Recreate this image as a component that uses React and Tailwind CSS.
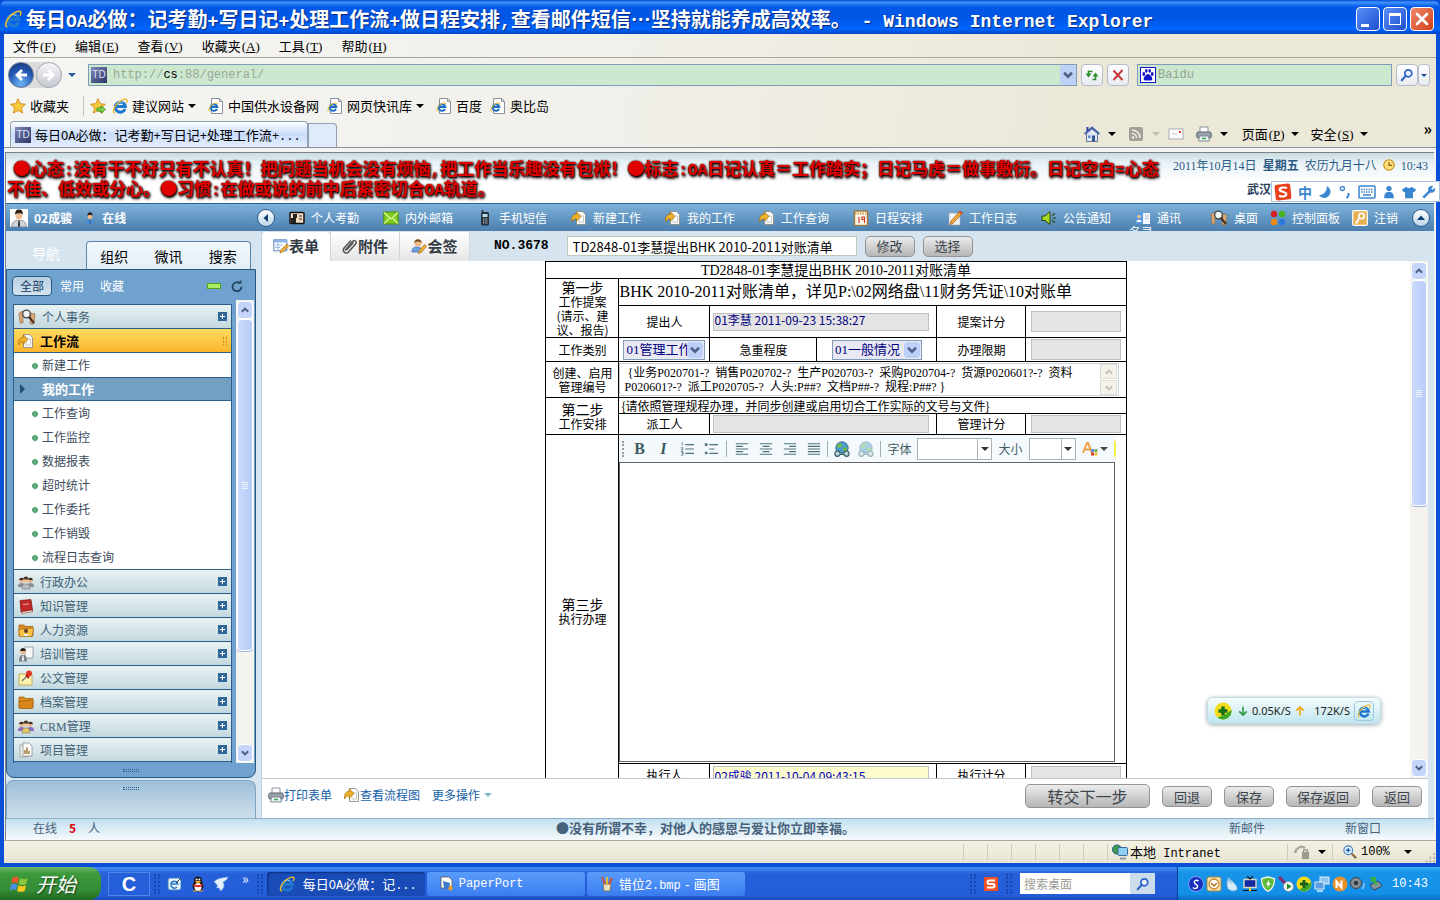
import React from 'react';

// Latin runs get their own face so that they take about half a Chinese character
function Mixed({ text, latin = "font-['Liberation_Serif',serif]" }) {
  return text.split(/([\x21-\x7e]+)/).filter(Boolean).map((part, i) =>
    /^[\x21-\x7e]/.test(part) ? (
      <span key={i} className={`leading-none ${latin}`}>{part}</span>
    ) : (
      <React.Fragment key={i}>{part}</React.Fragment>
    )
  );
}

function Svg({ className = 'w-4 h-4', box = '0 0 16 16', children }) {
  return (
    <svg viewBox={box} className={`shrink-0 ${className}`} fill="none" aria-hidden="true">
      {children}
    </svg>
  );
}

const IconIE = ({ className }) => (
  <Svg className={className}>
    <path d="M13 11A5 5 0 1 1 13.300 8.600H4" stroke="#1f78d0" strokeWidth="3" />
    <path d="M5 5.500A4.600 4.600 0 0 1 11 5" stroke="#7cc8f8" strokeWidth="1" />
    <path d="M3 15C0 14.500 1.500 8.500 6.500 4.500 10 1.500 14.500 0 15 2.200c.2 1-.3 2-.8 2.800" stroke="#eebc2c" strokeWidth="1.400" />
  </Svg>
);

const IconPage = () => (
  <Svg>
    <path d="M3.500.5h8l3 3v12h-11z" fill="#fff" stroke="#8c9199" />
    <path d="M11.500.5v3h3" stroke="#8c9199" />
    <path d="M9 11A3.300 3.300 0 1 1 9.300 9H3.600" stroke="#1b6fc4" strokeWidth="2" />
    <path d="M1.500 13.500C0 12 2 8 5 6.200 8 4.500 10.500 4.500 10 6.500" stroke="#e6b422" />
  </Svg>
);

const IconTD = () => (
  <span className="w-4 h-4 shrink-0 bg-gradient-to-br from-[#8189b8] to-[#2c3468] text-[10px] leading-4 text-center text-[#dfe3f5] font-['Liberation_Sans',sans-serif]">TD</span>
);

const IconStar = ({ arrow }) => (
  <Svg>
    <path d="M8 .8l2.200 4.900 5.200.6-3.900 3.500 1.100 5.300L8 12.400l-4.600 2.700 1.100-5.300L.6 6.300l5.200-.6z" fill="#fbc93d" stroke="#c98a16" strokeWidth=".9" />
    {arrow && <path d="M7 10h4V7.800l4.500 3.700L11 15.200V13H7z" fill="#7ed24b" stroke="#2f8a1d" strokeWidth=".8" />}
  </Svg>
);

const IconGlass = ({ className }) => (
  <Svg className={className}>
    <circle cx="9.500" cy="6" r="4" stroke="#2c63c4" strokeWidth="2" fill="#e6f1fb" />
    <path d="M6.500 9l-4.500 5" stroke="#2c63c4" strokeWidth="2.400" strokeLinecap="round" />
  </Svg>
);

const IconPrinter = () => (
  <Svg>
    <path d="M4 1h8v6H4z" fill="#fff" stroke="#8a93a0" />
    <rect x=".8" y="6" width="14.400" height="6" rx="1.500" fill="#9aa3ad" stroke="#59616b" />
    <path d="M3.500 10h9l1 5h-11z" fill="#e9f2f5" stroke="#6b7580" strokeWidth=".8" />
    <path d="M6 12.500h4" stroke="#3aa655" strokeWidth="1.500" />
  </Svg>
);

const IconHome = () => (
  <Svg>
    <path d="M2.500 7.500L8 3l5.500 4.500v8h-11z" fill="#dfe6f4" stroke="#45588c" strokeWidth=".8" />
    <path d="M.6 8L8 1.500 15.400 8" stroke="#4465a8" strokeWidth="1.800" />
    <path d="M2.500 1h2v4h-2z" fill="#2c3f9c" />
    <path d="M8 9.500h3v6H8z" fill="#34548f" />
    <path d="M4 9.500h2.500V12H4z" fill="#5a86cf" />
  </Svg>
);

const IconRss = () => (
  <Svg>
    <rect x="1" y="1" width="14" height="14" rx="2" fill="#a3a29a" />
    <path d="M4 4a8 8 0 0 1 8 8M4 7.500A4.500 4.500 0 0 1 8.500 12" stroke="#f2f0e8" strokeWidth="1.500" />
    <circle cx="5" cy="11.500" r="1.200" fill="#f2f0e8" />
  </Svg>
);

const IconFlow = ({ className }) => (
  <Svg className={className}>
    <path d="M5.500 1.500h6l3 3v10h-9z" fill="#f8f8f6" stroke="#8c8c88" strokeWidth=".9" />
    <path d="M8 6h4.500v6H8z" fill="#fff" stroke="#b5b5b0" strokeWidth=".7" />
    <path d="M.6 12C0 7 2 4.200 5.300 4.200V1.800L10 6.500 5.300 11.200V8.800C3 8.800 2 9.800.6 12z" fill="#f0b02a" stroke="#a06c08" strokeWidth=".7" />
  </Svg>
);

const IconMan = ({ className, shirt = '#eef2f6', tie = '#333' }) => (
  <Svg className={className}>
    <path d="M1.500 16c0-4 2-6 6.500-6s6.500 2 6.500 6z" fill={shirt} stroke="#6c747c" strokeWidth=".6" />
    <ellipse cx="8" cy="5.500" rx="3" ry="3.800" fill="#efbf93" />
    <path d="M4.600 5C4.400 1.500 6 .4 8 .4s3.600 1.100 3.400 4.600C10.500 3.500 6 3.500 4.600 5z" fill="#2b211b" />
    <path d="M7.500 10.500h1.200L9 15l-1 1-1-1z" fill={tie} />
  </Svg>
);

const IconCrowd = ({ a = '#8a8f94', b = '#b9bec3' }) => (
  <Svg>
    <path d="M0 13c0-3 1-4 3.500-4S7 10 7 13zM9 13c0-3 1-4 3.500-4S16 10 16 13z" fill={a} />
    <circle cx="3.500" cy="6.500" r="2.300" fill="#e3b189" />
    <circle cx="12.500" cy="6.500" r="2.300" fill="#e3b189" />
    <path d="M1.200 6c0-3 4.600-3 4.600 0zM10.200 6c0-3 4.600-3 4.600 0z" fill="#3a2c22" />
    <path d="M4 15c0-4 1-5 4-5s4 1 4 5z" fill={b} stroke="#666" strokeWidth=".5" />
    <circle cx="8" cy="6" r="2.800" fill="#efc298" />
    <path d="M5.200 5.500c0-4 5.600-4 5.600 0z" fill="#4a3527" />
  </Svg>
);

const IconDesk = () => (
  <Svg className="w-[18px] h-4" box="0 0 18 16">
    <path d="M1 4l4-2v12H2zM17 5l-4-1-1 11h4z" fill="#d8a876" stroke="#8a6238" strokeWidth=".6" />
    <circle cx="8.500" cy="5" r="3.800" fill="#eef3f6" stroke="#444" strokeWidth="1.300" />
    <path d="M11 8l5 6" stroke="#4a3020" strokeWidth="2" />
  </Svg>
);

const IconPencilForm = () => (
  <Svg>
    <path d="M.8 1.800h13v11H.8z" fill="#fff" stroke="#5b84c4" />
    <path d="M1 2h12.600v2.500H1z" fill="#8eb4ea" />
    <path d="M2 7h8M2 9.500h5M5 5v7" stroke="#9dbbe6" />
    <path d="M14 6l1.800 2-6 6-2.800 1 .8-3z" fill="#f3b13a" stroke="#a66a12" strokeWidth=".7" />
  </Svg>
);

const IconClip = () => (
  <Svg>
    <path d="M3 12.500L11 3a2 2 0 0 1 3 2.500L6.500 14a3 3 0 0 1-4.800-3.500L9 2.500M4.500 12L11.500 4.500" stroke="#555" strokeWidth="1.500" />
  </Svg>
);

const IconSign = () => (
  <Svg>
    <path d="M1 14c0-4 2-5 5-5s5 1 5 5z" fill="#6ea2e0" stroke="#3968a8" strokeWidth=".7" />
    <circle cx="7" cy="5" r="3.600" fill="#f0b98a" />
    <path d="M3.400 5c-.5-5 7.700-5 7.200 0-2-2-5-2-7.200 0z" fill="#7a4a20" />
    <path d="M13.500 6.500l2 2-5.500 6-2.500 1 .6-2.800z" fill="#f3b13a" stroke="#a66a12" strokeWidth=".7" />
  </Svg>
);

const IconBook = () => (
  <Svg>
    <path d="M2 2.500l11-1 1.500 10.500L3 14z" fill="#c22a2a" stroke="#7c1414" strokeWidth=".7" />
    <path d="M3 14l11.500-2v1.800L4 15.500z" fill="#f4eee4" stroke="#7c1414" strokeWidth=".5" />
    <path d="M5 6.500l6-.6" stroke="#f0a0a0" />
  </Svg>
);

const IconFolder = ({ person }) => (
  <Svg>
    <path d="M1 3h5l1.500 1.500H15V14H1z" fill="#d98b1f" stroke="#9a5c0c" strokeWidth=".7" />
    <path d="M.8 7.500L14 6l1.500 1L14 14.500H1.500z" fill={person ? '#f8c246' : '#d8861c'} stroke="#9a5c0c" strokeWidth=".6" />
    {person && <path d="M5.500 14c0-3 5-3 5 0z" fill="#e8eef2" />}
    {person && <circle cx="8" cy="9" r="2" fill="#5a3a26" />}
  </Svg>
);

const IconTrain = () => (
  <Svg>
    <path d="M7 1h8v11H7z" fill="#fafafa" stroke="#8c9199" strokeWidth=".8" />
    <path d="M1 15.500c0-5 1-6.500 4-6.500s4 1.500 4 6.500z" fill="#7c848c" />
    <circle cx="5" cy="5.500" r="2.800" fill="#eab98e" />
    <path d="M2.200 5c0-4 5.600-4 5.600 0z" fill="#2b211b" />
    <path d="M4.500 9.500h1L6 14l-1 1-1-1z" fill="#fff" />
  </Svg>
);

const IconPin = () => (
  <Svg>
    <path d="M1 4h13v11H1z" fill="#fdf3b0" stroke="#b99b3b" strokeWidth=".8" />
    <path d="M4 11l5-5" stroke="#777" strokeWidth="1.200" />
    <circle cx="11" cy="3.500" r="3" fill="#e2382a" />
    <path d="M8 5l3 3" stroke="#b51f14" strokeWidth="2" />
  </Svg>
);

const IconProject = () => (
  <Svg>
    <path d="M2 3h8v12H2z" fill="#eee" stroke="#8c8c88" strokeWidth=".7" />
    <path d="M5 1h6l3 3v10H5z" fill="#fff" stroke="#8c8c88" strokeWidth=".8" />
    <path d="M7 12V8M9 12V5.500M11 12V9" stroke="#a8874a" strokeWidth="1.600" />
  </Svg>
);

const Caret = ({ className = 'border-t-black' }) => (
  <span className={`w-0 h-0 shrink-0 border-x-4 border-x-transparent border-t-4 ${className}`} />
);

const Chevron = ({ up, className = 'w-2 h-2', color = '#4d6185' }) => (
  <svg viewBox="0 0 8 8" className={className} fill="none" aria-hidden="true">
    <path d={up ? 'M.8 5.800L4 2.600l3.200 3.200' : 'M.8 2.200L4 5.400l3.200-3.200'} stroke={color} strokeWidth="2" />
  </svg>
);

function ScrollBar({ thumb }) {
  return (
    <div className="w-[18px] shrink-0 flex flex-col bg-[#f4f3ee]">
      <button type="button" aria-label="Up" className="h-[18px] shrink-0 m-px mb-0 rounded-sm bg-[#c5d5fb] border border-white flex items-center justify-center">
        <Chevron up />
      </button>
      <div className={`${thumb} mx-px rounded-sm border border-white bg-gradient-to-r from-[#cbdafd] to-[#b9cbf8] flex flex-col items-center justify-center gap-px shadow-[0_1px_0_#9bb2e0]`}>
        {[0, 1, 2, 3].map((i) => <span key={i} className="w-1.5 h-px bg-[#eef4fe]" />)}
      </div>
      <div className="flex-1" />
      <button type="button" aria-label="Down" className="h-[18px] shrink-0 m-px rounded-sm bg-[#c5d5fb] border border-white flex items-center justify-center">
        <Chevron />
      </button>
    </div>
  );
}

function TitleBar() {
  const btn = 'w-6 h-6 rounded-[4px] border border-white flex items-center justify-center';
  return (
    <header className="h-[34px] shrink-0 flex items-center gap-1 pl-1 pr-1.5 pt-1 rounded-t-lg bg-[linear-gradient(180deg,#0a4bd0_0%,#3d92ff_7%,#0458e6_20%,#0055e5_50%,#0066fd_85%,#0045c4_100%)]">
      <IconIE className="w-[18px] h-[18px]" />
      <h1 className="flex-1 whitespace-pre text-[20px] leading-6 font-bold text-white font-['Noto_Sans_CJK_SC',sans-serif] [text-shadow:1px_1px_1px_#0a2a80]">
        <Mixed latin="text-[18px] font-['Liberation_Mono',monospace]" text="每日OA必做：记考勤+写日记+处理工作流+做日程安排,查看邮件短信…坚持就能养成高效率。" />
        <span className="font-['Liberation_Mono',monospace] text-[18px] leading-none"> - Windows Internet Explorer</span>
      </h1>
      <div className="flex gap-[3px]">
        <button type="button" aria-label="Minimize" className={`${btn} bg-gradient-to-br from-[#5a8df5] to-[#1f4fd0]`}>
          <span className="w-2 h-[3px] bg-white mt-3 mr-1.5" />
        </button>
        <button type="button" aria-label="Maximize" className={`${btn} bg-gradient-to-br from-[#5a8df5] to-[#1f4fd0]`}>
          <span className="w-3 h-3 border border-t-[3px] border-white" />
        </button>
        <button type="button" aria-label="Close" className={`${btn} bg-gradient-to-br from-[#f0896a] to-[#cf3c12]`}>
          <Svg className="w-4 h-4"><path d="M3 3l10 10M13 3L3 13" stroke="#fff" strokeWidth="2.600" strokeLinecap="round" /></Svg>
        </button>
      </div>
    </header>
  );
}

const MENUS = [['文件', 'F'], ['编辑', 'E'], ['查看', 'V'], ['收藏夹', 'A'], ['工具', 'T'], ['帮助', 'H']];

function Hotkey({ label, k }) {
  return (
    <span className="whitespace-nowrap">
      {label}
      <span className="font-['Liberation_Serif',serif] ml-px leading-none">(<u>{k}</u>)</span>
    </span>
  );
}

function Chrome() {
  const small = 'h-[22px] rounded-sm border border-[#b4bccb] bg-gradient-to-b from-white to-[#e8ebf2] flex items-center justify-center';
  return (
    <div className="shrink-0 text-[13px] leading-4 bg-[linear-gradient(100deg,#f5f5f3_0%,#f1f0eb_40%,#ece8d8_75%)]">
      <nav className="h-6 flex items-center gap-[19px] pl-[9px] border-b border-[#aca899]">
        {MENUS.map(([label, k]) => (
          <button type="button" key={k}><Hotkey label={label} k={k} /></button>
        ))}
      </nav>
      <div className="h-[34px] flex items-center pl-1 pr-1.5">
        <div className="flex items-center gap-0.5 rounded-full bg-[#dcdcdc] mr-1.5">
          <button type="button" aria-label="Back" className="w-[26px] h-[26px] rounded-full border border-[#6b7c9c] bg-[radial-gradient(circle_at_50%_85%,#6fb4f8,#2457b0_55%,#16306e)] flex items-center justify-center">
            <Svg><path d="M9 3L4 8l5 5M4 8h10" stroke="#fff" strokeWidth="2.800" /></Svg>
          </button>
          <button type="button" aria-label="Forward" className="w-[26px] h-[26px] rounded-full border border-[#a6a9b0] bg-gradient-to-b from-[#f6f6f8] to-[#c4c8d0] flex items-center justify-center">
            <Svg><path d="M7 3l5 5-5 5M12 8H2" stroke="#fff" strokeWidth="3" /></Svg>
          </button>
        </div>
        <Caret className="border-t-[#1f5f9c]" />
        <div className="flex-1 ml-3 h-[22px] flex items-center border border-[#7f9db9] bg-[#cce8cf] pl-0.5">
          <IconTD />
          <label className="flex-1 pl-1.5 text-[12px] text-[#9aa79b] font-['Liberation_Mono',monospace]">
            http://<span className="text-black">cs</span>:88/general/
          </label>
          <button type="button" aria-label="History" className="w-4 h-5 bg-[#bdd0f8] rounded-sm flex items-center justify-center"><Chevron className="w-2.5 h-2.5" /></button>
        </div>
        <button type="button" aria-label="Refresh" className={`${small} w-[22px] ml-1`}>
          <Svg><path d="M4.500 8.500V4.500h4M4.500 3.500v6" stroke="#2f8f2c" strokeWidth="1.600" /><path d="M1.500 6.500h6l-3 4z M8.500 9.500h6l-3-4z" fill="#2f8f2c" /><path d="M11.500 7v5.500h-3" stroke="#2f8f2c" strokeWidth="1.600" /></Svg>
        </button>
        <button type="button" aria-label="Stop" className={`${small} w-[22px] ml-1`}>
          <Svg><path d="M3.500 3.500l9 9.500M12.500 3L3.500 13" stroke="#c93838" strokeWidth="2" /></Svg>
        </button>
        <div className="w-[255px] ml-2 h-[22px] flex items-center border border-[#7f9db9] bg-[#cce8cf] pl-0.5">
          <Svg className="w-4 h-4">
            <rect x=".5" y=".5" width="15" height="15" fill="#fff" stroke="#1414c8" />
            <ellipse cx="3.800" cy="7" rx="1.400" ry="1.900" fill="#1414c8" />
            <ellipse cx="6.300" cy="3.800" rx="1.300" ry="1.900" fill="#1414c8" />
            <ellipse cx="9.700" cy="3.800" rx="1.300" ry="1.900" fill="#1414c8" />
            <ellipse cx="12.200" cy="7" rx="1.400" ry="1.900" fill="#1414c8" />
            <path d="M8 7c2 0 4.500 3.500 4.300 5.300C12 14 10 13.500 8 13.500S4 14 3.700 12.300C3.500 10.500 6 7 8 7z" fill="#1414c8" />
          </Svg>
          <input aria-label="Search" placeholder="Baidu" className="min-w-0 flex-1 pl-0.5 outline-none text-[12px] leading-4 placeholder:text-[#93a395] font-['Liberation_Mono',monospace]" />
        </div>
        <button type="button" aria-label="Go" className={`${small} w-[22px] ml-1`}><IconGlass className="w-3.5 h-3.5" /></button>
        <button type="button" aria-label="Providers" className={`${small} w-3`}><span className="border-x-3 border-x-transparent border-t-3 border-t-[#1c4d9c]" /></button>
      </div>
      <div className="h-7 flex items-center pl-1.5 gap-1">
        <a href="#" className="flex items-center gap-1"><IconStar />收藏夹</a>
        <span className="w-px h-5 bg-[#c6c3b6] ml-2.5 mr-0.5" />
        <IconStar arrow />
        <a href="#" className="flex items-center gap-1 ml-0.5"><IconIE />建议网站<Caret /></a>
        <a href="#" className="flex items-center gap-1 ml-2"><IconPage />中国供水设备网</a>
        <a href="#" className="flex items-center gap-1 ml-1"><IconPage />网页快讯库<Caret /></a>
        <a href="#" className="flex items-center gap-1 ml-2"><IconPage />百度</a>
        <a href="#" className="flex items-center gap-1 ml-1"><IconPage />奥比岛</a>
      </div>
      <div className="h-7 flex items-end border-b border-[#8a8f99] pl-1.5">
        <div className="h-[26px] w-[298px] flex items-center gap-1 px-1 rounded-t border border-b-0 border-[#91a0b5] bg-gradient-to-b from-[#fdfeff] via-[#c9dcfa] to-[#e6effc] whitespace-nowrap">
          <IconTD />
          <span><Mixed latin="text-[12px] font-['Liberation_Mono',monospace]" text="每日OA必做：记考勤+写日记+处理工作流+..." /></span>
        </div>
        <button type="button" aria-label="New tab" className="w-[29px] h-6 rounded-tr border border-b-0 border-[#91a0b5] bg-[#dfeafb]" />
        <div className="ml-auto h-full flex items-center gap-2">
          <IconHome /><Caret className="border-t-black border-x-3 border-t-3" />
          <span className="ml-1"><IconRss /></span><Caret className="border-t-[#c2bfb0] border-x-3 border-t-3" />
          <span className="mr-1"><Svg><rect x="1" y="3" width="14" height="10" fill="#fff" stroke="#a9a9b8" /><path d="M11 5h2v2h-2z" fill="#d33" /><path d="M4 8h5" stroke="#bbb" /></Svg></span>
          <IconPrinter /><Caret className="border-t-black border-x-3 border-t-3" />
          <button type="button" className="ml-1.5 flex items-center gap-1.5"><Hotkey label="页面" k="P" /><Caret /></button>
          <button type="button" className="ml-1 flex items-center gap-1.5"><Hotkey label="安全" k="S" /><Caret /></button>
          <span className="ml-12 mr-1 mb-3 text-[16px] font-bold leading-4">»</span>
        </div>
      </div>
    </div>
  );
}

function ImeBar() {
  return (
    <div className="absolute right-0 top-[181px] h-[21px] w-[169px] flex items-center gap-1.5 pl-0.5 bg-white border border-[#a9c3e0]">
      <Svg className="w-[18px] h-[18px]"><rect x="1" y="1" width="14" height="14" rx="2" fill="#e8401c" transform="rotate(-6 8 8)" /><path d="M11.500 4.500C9 3.500 5 4 5 6s6 1.500 6 3.800-4 2.700-6.500 1.500" stroke="#fff" strokeWidth="1.900" /></Svg>
      <span className="text-[14px] leading-4 font-bold text-[#3a86d0]">中</span>
      <Svg className="w-[14px] h-[14px]"><path d="M10 1a7.200 7.200 0 1 1-9 10.500C7 12 10.500 7 10 1z" fill="#3a86d0" /></Svg>
      <Svg className="w-[14px] h-[14px]"><circle cx="5" cy="4" r="2.300" stroke="#3a86d0" strokeWidth="1.500" /><path d="M12 9v3l-2 3" stroke="#3a86d0" strokeWidth="2.300" /></Svg>
      <Svg className="w-[18px] h-[14px]" box="0 0 18 14"><rect x="1" y="1" width="16" height="12" rx="1" stroke="#3a86d0" strokeWidth="1.500" /><path d="M3 4.500h12M3 7h12" stroke="#3a86d0" strokeWidth="1.500" strokeDasharray="1.500 1" /><path d="M5 10h8" stroke="#3a86d0" strokeWidth="1.500" /></Svg>
      <Svg className="w-[14px] h-[14px]"><circle cx="8" cy="4" r="3" fill="#3a86d0" /><path d="M2.500 15c0-5 1.500-7 5.500-7s5.500 2 5.500 7z" fill="#3a86d0" /></Svg>
      <Svg className="w-[14px] h-[14px]"><path d="M5 2c1 2 5 2 6 0l5 3-2 3.500-1.500-.7V15h-9V7.800L2 8.500 0 5z" fill="#3a86d0" /></Svg>
      <Svg className="w-[14px] h-[14px]"><path d="M1.500 14.500l8-8" stroke="#3a86d0" strokeWidth="3" /><path d="M13 1.500L10.500 4l1.500 1.500L14.500 3A4 4 0 1 1 13 1.500z" fill="#3a86d0" /></Svg>
    </div>
  );
}

function Banner() {
  const latin = "text-[16px] font-['Liberation_Mono',monospace]";
  return (
    <div className="h-[50px] shrink-0 flex justify-between overflow-hidden bg-[linear-gradient(180deg,#c9dcdf_0%,#e9f2f7_20%,#ffffff_60%)]">
      <p className="pl-px pt-1.5 whitespace-nowrap text-[17px] leading-[18px] font-bold text-[#e00000] [text-shadow:1px_1px_2px_#000,1px_2px_3px_#200,0_0_2px_#400]">
        <span className="ml-1.5">●</span>
        <Mixed latin={latin} text="心态:没有干不好只有不认真！把问题当机会没有烦恼,把工作当乐趣没有包袱！●标志:OA日记认真＝工作踏实；日记马虎＝做事敷衍。日记空白=心态" />
        <br />
        <Mixed latin={latin} text="不佳、低效或分心。●习惯:在做或说的前中后紧密切合OA轨道。" />
      </p>
      <div className="pr-1.5 pt-1 text-[12px] leading-4 text-[#2c5a86] whitespace-nowrap">
        <div className="flex items-center gap-1.5">
          <span><Mixed text="2011年10月14日" /></span>
          <b>星期五</b>
          <span>农历九月十八</span>
          <Svg className="w-3 h-3"><circle cx="8" cy="8" r="7" fill="#ffe37a" stroke="#c68a1a" strokeWidth="1.500" /><path d="M8 4v4.500h4" stroke="#8a5a10" strokeWidth="1.500" /></Svg>
          <span><Mixed text="10:43" /></span>
        </div>
        <b className="block mt-2 ml-[74px] text-[#27405c]">武汉</b>
      </div>
    </div>
  );
}

const NAV = [
  ['个人考勤', <Svg><rect x="1" y="2.500" width="14" height="11" rx="1" fill="#f4dcc0" stroke="#111" strokeWidth="1.500" /><path d="M2 8h5v5H2zM4 4h4v4H4z" fill="#222" /><path d="M10 6h3M10 9h3" stroke="#222" strokeWidth="1.200" /></Svg>],
  ['内外邮箱', <Svg><rect x=".8" y="2" width="14.400" height="12" fill="#7ecb1e" stroke="#4a8e0a" /><path d="M1 2.500l7 6.500 7-6.500M1 13.500l5-5M15 13.500l-5-5" stroke="#d6f59a" strokeWidth="1.300" /></Svg>],
  ['手机短信', <Svg><rect x="4" y="2" width="8" height="13.500" rx="1.500" fill="#26303a" /><path d="M5.500 0v3" stroke="#26303a" strokeWidth="1.500" /><path d="M5.500 4h5v3h-5z" fill="#b8d8ee" /><path d="M6 9h4.500M6 11h4.500M6 13h4.500" stroke="#cfd8e0" strokeDasharray="1 .7" /></Svg>],
  ['新建工作', <IconFlow />],
  ['我的工作', <IconFlow />],
  ['工作查询', <IconFlow />],
  ['日程安排', <Svg><rect x="1.500" y="1" width="13" height="14.500" fill="#fbf6e8" stroke="#a0793c" strokeWidth="1.400" /><path d="M2 3.500h12" stroke="#d0a04c" strokeWidth="2" strokeDasharray="1.500 1" /><path d="M6 7v6M9 7h2.500v2.500H9zM11.500 9v4" stroke="#d23b2a" strokeWidth="1.200" /></Svg>],
  ['工作日志', <Svg><path d="M2 3h11v12H2z" fill="#f4f6fa" stroke="#98a4b8" strokeWidth=".7" /><path d="M13 1l2.500 2L6 13.500 3 14.500 4 11z" fill="#f5a83a" stroke="#8a5010" strokeWidth=".7" /><path d="M13 1l2.500 2-1 1.200L12 2.200z" fill="#d23b2a" /></Svg>],
  ['公告通知', <Svg><path d="M1 6h3l5-4.500v13L4 10.500H1z" fill="#a9d928" stroke="#26420a" /><path d="M11 5.500l3-2M11.500 8H15M11 10.500l3 2" stroke="#26420a" strokeWidth="1.200" /></Svg>],
  ['通讯名录', <Svg><path d="M1 3h7v11H1z" fill="#5a9ae0" /><path d="M8 3h7v11H8z" fill="#f3f6fa" /><circle cx="4" cy="6.500" r="1.800" fill="#f0c090" /><path d="M1.500 12c0-3 5-3 5 0z" fill="#fff" /><path d="M10 6h3.500M10 8.500h3.500" stroke="#9ab4d0" strokeWidth=".9" /></Svg>],
];

function RoundButton({ label, children }) {
  return (
    <button type="button" aria-label={label} className="w-[18px] h-[18px] shrink-0 rounded-full border border-[#2d5c8c] bg-gradient-to-b from-white to-[#bcd5ea] flex items-center justify-center">
      <svg viewBox="0 0 8 8" className="w-2 h-2" fill="#123f70">{children}</svg>
    </button>
  );
}

function NavBar() {
  return (
    <nav className="h-7 shrink-0 flex items-center overflow-hidden pl-1 pr-1 border-t border-[#2d6390] bg-gradient-to-b from-[#7fb2da] to-[#4a7fae] text-[12px] leading-[14px] text-white whitespace-nowrap">
      <div className="w-[247px] shrink-0 flex items-center gap-1.5 font-bold">
        <span className="bg-white"><IconMan className="w-[18px] h-[18px]" shirt="#cfd6dc" /></span>
        <span className="mr-1.5">02成骏</span>
        <IconMan className="w-3 h-4" shirt="#4a90e0" tie="#2a60a0" />
        在线
      </div>
      <RoundButton label="Scroll left"><path d="M6 0v8L1.500 4z" /></RoundButton>
      <div className="flex-1 min-w-0 flex pl-3.5 h-full">
        {NAV.map(([label, icon]) => (
          <a href="#" key={label} className="w-[94px] shrink-0 h-full flex items-center gap-1.5">
            {icon}
            {label === '通讯名录' ? (
              <span className="relative">通讯<span className="absolute right-7 top-3.5">名录</span></span>
            ) : (
              <span>{label}</span>
            )}
          </a>
        ))}
      </div>
      <a href="#" className="flex items-center gap-1.5"><IconDesk />桌面</a>
      <a href="#" className="flex items-center gap-1.5 ml-3">
        <Svg><circle cx="4" cy="4" r="3.200" fill="#d42020" /><circle cx="12" cy="4" r="3.200" fill="#46b41e" /><circle cx="4" cy="12" r="3.200" fill="#f08a10" /><circle cx="12" cy="12" r="3.200" fill="#2a7ae0" /></Svg>
        控制面板
      </a>
      <a href="#" className="flex items-center gap-1.5 ml-3 mr-3.5">
        <Svg><rect x=".7" y=".7" width="14.600" height="14.600" rx="1" fill="#e8b050" stroke="#fff" strokeWidth="1.200" /><circle cx="9.500" cy="6" r="2.700" stroke="#fff" strokeWidth="1.700" /><path d="M7.500 8L4 12.500l1.500 1M5.500 10.500l1.500 1" stroke="#fff" strokeWidth="1.500" /></Svg>
        注销
      </a>
      <RoundButton label="Collapse"><path d="M0 6h8L4 1.500z" /></RoundButton>
    </nav>
  );
}

const WORK_ITEMS = ['新建工作', '我的工作', '工作查询', '工作监控', '数据报表', '超时统计', '工作委托', '工作销毁', '流程日志查询'];

const MODULES = [
  ['行政办公', <IconCrowd />],
  ['知识管理', <IconBook />],
  ['人力资源', <IconFolder person />],
  ['培训管理', <IconTrain />],
  ['公文管理', <IconPin />],
  ['档案管理', <IconFolder />],
  ['CRM管理', <IconCrowd a="#8e6cc0" b="#e2c860" />],
  ['项目管理', <IconProject />],
];

function ModuleRow({ icon, label }) {
  return (
    <button type="button" className="w-full h-6 flex items-center gap-1.5 px-1 border-b border-[#2d5f8b] bg-gradient-to-b from-[#e9f2f3] to-[#c3d9df] text-left text-[#3f5f78]">
      {icon}
      <span className="flex-1"><Mixed text={label} /></span>
      <svg viewBox="0 0 9 9" className="w-[9px] h-[9px]"><path d="M0 0h9v9H0z" fill="#2f6798" /><path d="M2 4.500h5M4.500 2v5" stroke="#fff" /></svg>
    </button>
  );
}

function Grip() {
  return <span className="w-4 h-[3px] border-y border-dotted border-[#2f628f]" />;
}

function Sidebar() {
  return (
    <aside className="w-[250px] shrink-0 flex flex-col text-[12px] leading-[14px]">
      <div className="h-[38px] shrink-0 flex items-end text-[14px] leading-4">
        <button type="button" className="w-20 pb-2 text-white">导航</button>
        <div className="w-[165px] h-7 flex items-center justify-around rounded-t border border-b-0 border-[#5b87ac] bg-gradient-to-b from-[#f2f8fc] to-[#e3eef6]">
          <button type="button">组织</button>
          <button type="button">微讯</button>
          <button type="button">搜索</button>
        </div>
      </div>
      <div className="flex-1 min-h-0 flex flex-col rounded-b-lg border border-[#27587f] bg-[#6fa2ce]">
        <div className="h-[30px] shrink-0 flex items-center gap-4 pl-[5px] pr-3 pt-0.5 text-white">
          <button type="button" className="w-10 h-5 -mr-2 rounded border border-[#27587f] bg-gradient-to-b from-[#b6cfe4] to-[#d4e3ef] text-[#12395f]">全部</button>
          <button type="button">常用</button>
          <button type="button">收藏</button>
          <span className="ml-auto w-3.5 h-1.5 border border-[#4da21e] bg-[#a9ec62]" />
          <Svg className="w-3 h-3 -ml-1.5"><path d="M12 4.500A6 6 0 1 0 14 9" stroke="#27445e" strokeWidth="2.400" /><path d="M8 4.500h6V0z" fill="#27445e" /></Svg>
        </div>
        <div className="flex-1 min-h-0 flex gap-1 pl-1.5">
          <div className="w-[219px] mt-1 overflow-hidden border border-t-[#2d5f8b] border-x-[#2d5f8b] border-b-0">
            <ModuleRow icon={<IconDesk />} label="个人事务" />
            <button type="button" className="w-full h-6 flex items-center gap-1.5 px-1 border-b border-[#2d5f8b] bg-gradient-to-b from-[#ffdc5e] to-[#fbb52a] text-left font-bold text-black">
              <IconFlow />
              <span className="flex-1 text-[13px]">工作流</span>
              <span className="w-1 h-2 border-x border-dotted border-[#c98510]" />
            </button>
            <ul className="bg-white text-[#3c4a5c] border-b border-[#2d5f8b]">
              {WORK_ITEMS.map((item) =>
                item === '我的工作' ? (
                  <li key={item} className="h-6 flex items-center pl-1.5 border-y border-[#2d5f8b] bg-[#739fc3] font-bold text-white">
                    <span className="w-[5px] border-y-5 border-y-transparent border-l-5 border-l-[#1f4a74] mr-[17px]" />
                    <a href="#" className="text-[13px]">{item}</a>
                  </li>
                ) : (
                  <li key={item} className="h-6 flex items-center gap-1 pl-[18px]">
                    <span className="w-1.5 h-1.5 mt-0.5 rounded-full bg-[#5db07e] border border-[#469467]" />
                    <a href="#">{item}</a>
                  </li>
                )
              )}
            </ul>
            {MODULES.map(([label, icon]) => <ModuleRow key={label} label={label} icon={icon} />)}
          </div>
          <ScrollBar thumb="h-[332px]" />
        </div>
        <div className="h-3.5 shrink-0 flex items-center justify-center"><Grip /></div>
      </div>
      <div className="h-[38px] mt-0.5 shrink-0 flex justify-center pt-1.5 rounded-t-lg border border-b-0 border-[#7fa5c2] bg-gradient-to-b from-[#9dbfd9] to-[#cfe0ec]"><Grip /></div>
    </aside>
  );
}

const grayBtn = 'rounded-[5px] border border-[#949494] bg-gradient-to-b from-[#ececec] to-[#b6b6b6] text-[#3c444c]';
const cell = 'border border-black p-0 text-center';
const field = 'block bg-[#e4e4e4] border border-[#c0c0c0] outline-none';

function SelectBox({ label, value, className }) {
  return (
    <span className={`relative inline-block align-middle h-5 ${className}`}>
      <select aria-label={label} defaultValue={value} className="w-full h-5 pl-0.5 pr-4 appearance-none border border-[#7f9db9] bg-[#e9e9f3] text-[13px] leading-4 text-[#000080] font-['Liberation_Serif','Noto_Sans_CJK_SC',serif]">
        <option>{value}</option>
      </select>
      <span className="pointer-events-none absolute right-0.5 top-0.5 w-4 h-4 rounded-sm bg-[#bdd0f8] flex items-center justify-center"><Chevron className="w-2.5 h-2.5" /></span>
    </span>
  );
}

function AlignIcon({ d }) {
  return <Svg className="w-3.5 h-3.5"><path d={d} stroke="#4c7477" strokeWidth="1.300" /></Svg>;
}

const Globe = ({ className }) => (
  <Svg className={className}>
    <circle cx="8" cy="7" r="6.200" fill="#4f9bd0" stroke="#2b5c84" strokeWidth=".8" />
    <path d="M4 3c3-2 5 0 4 2S3 8 3 5zM9 7c3-2 5 0 4 3H9z" fill="#6cbb4c" />
    <path d="M1 13a2.500 2.500 0 0 1 5-1h4a2.500 2.500 0 0 1 5 1c0 3-4 3-5 .5H6C5 16 1 16 1 13z" fill="#b8d2d6" stroke="#2f5c62" strokeWidth="1.200" />
  </Svg>
);

function EditorBar() {
  const sep = 'w-px h-4 shrink-0 bg-[#9db0b4]';
  const combo = 'h-[22px] shrink-0 flex justify-end border border-[#a9b4b8] bg-white';
  const arrow = <span className="w-3.5 h-full flex items-center justify-center border-l border-[#a9b4b8]"><Caret className="border-x-3 border-t-3 border-t-[#333]" /></span>;
  return (
    <div className="h-[27px] flex items-center gap-2.5 pl-[3px] bg-[#f4f9fd] text-[12px] leading-[14px] text-[#3c5c60]">
      <span className="w-0.5 h-4 -mr-0.5 shrink-0 border-l-2 border-dotted border-[#9a9a9a]" />
      <button type="button" aria-label="Bold" className="w-3.5 shrink-0 font-['Liberation_Serif',serif] text-[16px] leading-4 font-bold">B</button>
      <button type="button" aria-label="Italic" className="w-3.5 shrink-0 font-['Liberation_Serif',serif] text-[16px] leading-4 font-bold italic">I</button>
      <Svg className="w-3.5 h-3.5"><path d="M6 3h10M6 8h10M6 13h10" stroke="#4c7477" strokeWidth="1.300" /><path d="M2.500 0v4M1 6.500h2.500L1.500 9H4M1 11h2.500v1.500H2h1.500V15H1" stroke="#4c7477" strokeWidth=".9" /></Svg>
      <Svg className="w-3.5 h-3.5"><path d="M6 3h10M6 8h6M6 13h10" stroke="#4c7477" strokeWidth="1.300" /><path d="M1 1.500h3v3H1zM1 11h3v3H1z" fill="#4c7477" /></Svg>
      <span className={`${sep} -mx-0.5`} />
      <AlignIcon d="M1 2h14M1 5h8M1 8h14M1 11h8M1 14h14" />
      <AlignIcon d="M1 2h14M4 5h8M1 8h14M4 11h8M1 14h14" />
      <AlignIcon d="M1 2h14M7 5h8M1 8h14M7 11h8M1 14h14" />
      <AlignIcon d="M1 2h14M1 5h14M1 8h14M1 11h14M1 14h14" />
      <span className={`${sep} -mx-1`} />
      <Globe className="w-4 h-4" />
      <Globe className="w-4 h-4 opacity-45 -ml-0.5" />
      <span className={`${sep} -mx-1`} />
      <span className="whitespace-nowrap">字体</span>
      <button type="button" aria-label="字体" className={`${combo} w-[75px] -ml-1`}>{arrow}</button>
      <span className="whitespace-nowrap -ml-1">大小</span>
      <button type="button" aria-label="大小" className={`${combo} w-[47px] -ml-1`}>{arrow}</button>
      <button type="button" aria-label="Color" className="-ml-1 shrink-0 flex items-center gap-0.5">
        <Svg><path d="M1 12L5 2h1l4 10M3 8.500h5" stroke="#f0a040" strokeWidth="2" /><path d="M9 8h3v3H9z" fill="#6a8ad8" /><path d="M12.500 8h3v3h-3z" fill="#70b050" /><path d="M9 11.500h3v3H9z" fill="#e04030" /><path d="M12.500 11.500h3v3h-3z" fill="#f0c030" /></Svg>
        <Caret className="border-x-3 border-t-3 border-t-[#444]" />
      </button>
      <span className="w-0.5 h-4 shrink-0 -ml-1 bg-[#f4f04a]" />
    </div>
  );
}

function FormTable() {
  return (
    <table className="mx-auto w-[581px] table-fixed border-collapse bg-white text-[12px] leading-[14px] text-black">
      <colgroup>
        <col className="w-[73px]" /><col className="w-[91px]" /><col className="w-[107px]" />
        <col className="w-[120px]" /><col className="w-[89px]" /><col className="w-[100px]" />
      </colgroup>
      <tbody>
        <tr><td colSpan={6} className={`${cell} h-[17px] text-[14px]`}><Mixed text="TD2848-01李慧提出BHK 2010-2011对账清单" /></td></tr>
        <tr>
          <th rowSpan={2} className={`${cell} font-normal`}><span className="block text-[14px] leading-4">第一步</span>工作提案<br />(请示、建<br />议、报告)</th>
          <td colSpan={5} className="border border-black p-0 h-[27px] text-[16px] leading-5 font-['Liberation_Serif','Noto_Sans_CJK_SC',serif]">BHK 2010-2011对账清单，详见P:\02网络盘\11财务凭证\10对账单</td>
        </tr>
        <tr>
          <td className={`${cell} h-8`}>提出人</td>
          <td colSpan={2} className={cell}><input aria-label="提出人" readOnly value="01李慧 2011-09-23 15:38:27" className={`${field} ml-[3px] w-[216px] h-[18px] pb-1 leading-[14px] text-[#000080]`} /></td>
          <td className={cell}>提案计分</td>
          <td className={cell}><input aria-label="提案计分" readOnly className={`${field} mx-auto w-[90px] h-[21px]`} /></td>
        </tr>
        <tr>
          <th className={`${cell} h-6 font-normal`}>工作类别</th>
          <td className={cell}><SelectBox label="工作类别" value="01管理工作" className="w-[82px]" /></td>
          <td className={cell}>急重程度</td>
          <td className={cell}><SelectBox label="急重程度" value="01一般情况" className="w-[90px]" /></td>
          <td className={cell}>办理限期</td>
          <td className={cell}><input aria-label="办理限期" readOnly className={`${field} mx-auto w-[90px] h-[21px]`} /></td>
        </tr>
        <tr>
          <th className={`${cell} h-9 font-normal`}>创建、启用<br />管理编号</th>
          <td colSpan={5} className={cell}>
            <div className="flex h-[33px] w-[500px] border border-[#c9d3dc]">
              <textarea aria-label="管理编号" readOnly value={' {业务P020701-?  销售P020702-?  生产P020703-?  采购P020704-?  货源P020601?-?  资料\nP020601?-?  派工P020705-?  人头:P##?  文档P##-?  规程:P##? }'} className="flex-1 resize-none overflow-hidden whitespace-pre outline-none pl-1 pt-0.5 leading-[14px] font-['Liberation_Serif','Noto_Sans_CJK_SC',serif]" />
              <div className="w-[18px] flex flex-col gap-px pr-px">
                <span className="flex-1 flex items-center justify-center border border-[#e0ddd0] bg-[#f3f2ec]"><Chevron up color="#c8c5b4" /></span>
                <span className="flex-1 flex items-center justify-center border border-[#e0ddd0] bg-[#f3f2ec]"><Chevron color="#c8c5b4" /></span>
              </div>
            </div>
          </td>
        </tr>
        <tr>
          <th rowSpan={2} className={`${cell} font-normal`}><span className="block text-[14px] leading-4">第二步</span>工作安排</th>
          <td colSpan={5} className="border border-black p-0 pl-0.5 h-4">{'{请依照管理规程办理，并同步创建或启用切合工作实际的文号与文件}'}</td>
        </tr>
        <tr>
          <td className={`${cell} h-[21px]`}>派工人</td>
          <td colSpan={2} className={cell}><input aria-label="派工人" readOnly className={`${field} ml-[3px] w-[216px] h-[18px]`} /></td>
          <td className={cell}>管理计分</td>
          <td className={cell}><input aria-label="管理计分" readOnly className={`${field} mx-auto w-[90px] h-[18px]`} /></td>
        </tr>
        <tr>
          <th rowSpan={2} className={`${cell} font-normal`}><span className="block text-[14px] leading-4">第三步</span>执行办理</th>
          <td colSpan={5} className="border border-black p-0 h-[329px] align-top">
            <div className="w-[497px]">
              <EditorBar />
              <textarea aria-label="执行办理" className="block w-[496px] h-[300px] resize-none border border-[#666] bg-white outline-none" />
            </div>
          </td>
        </tr>
        <tr>
          <td className={`${cell} h-[23px]`}>执行人</td>
          <td colSpan={2} className={cell}><input aria-label="执行人" readOnly value="02成骏 2011-10-04 09:43:15" className="block ml-[3px] w-[216px] h-[18px] border border-[#c0c0c0] bg-[#fdfccf] outline-none leading-[14px] text-[#0000c0]" /></td>
          <td className={cell}>执行计分</td>
          <td className={cell}><input aria-label="执行计分" readOnly className={`${field} mx-auto w-[90px] h-[18px]`} /></td>
        </tr>
      </tbody>
    </table>
  );
}

function Workspace() {
  const tab = 'h-[29px] flex items-center justify-center text-[15px] leading-5 font-bold text-[#333b44]';
  return (
    <main className="flex-1 min-w-0 ml-[5px] mr-1.5 flex flex-col border-l border-[#c3d2de]">
      <div className="h-[30px] shrink-0 flex items-center">
        <button type="button" className={`${tab} w-[68px] bg-white rounded-t`}><IconPencilForm />表单</button>
        <button type="button" className={`${tab} w-[70px] bg-gradient-to-b from-white to-[#e6e6e6] border-x border-[#cfd6dc]`}><IconClip />附件</button>
        <button type="button" className={`${tab} w-[70px] bg-gradient-to-b from-white to-[#e6e6e6] border-r border-[#cfd6dc]`}><IconSign />会签</button>
        <label htmlFor="flow" className="ml-6 mr-[18px] font-['Liberation_Mono',monospace] text-[13px] leading-4 font-bold text-black">NO.3678</label>
        <input id="flow" readOnly value="TD2848-01李慧提出BHK 2010-2011对账清单" className="w-[290px] h-5 pl-[5px] border border-[#bfcbb8] bg-white text-[13px] leading-4 text-black outline-none" />
        <button type="button" className={`${grayBtn} ml-2 w-[50px] h-[21px] text-[13px] leading-4`}>修改</button>
        <button type="button" className={`${grayBtn} ml-2 w-[50px] h-[21px] text-[13px] leading-4`}>选择</button>
      </div>
      <div className="flex-1 min-h-0 flex bg-white">
        <div className="flex-1 overflow-hidden"><FormTable /></div>
        <ScrollBar thumb="h-[226px]" />
      </div>
      <div className="h-10 shrink-0 flex items-center gap-3 pl-1.5 pr-1.5 bg-white border-t border-[#c3c8cc] text-[12px] leading-[14px] text-[#1560a8]">
        <a href="#" className="mb-2 flex items-center"><IconPrinter />打印表单</a>
        <a href="#" className="mb-2 flex items-center"><IconFlow />查看流程图</a>
        <a href="#" className="mb-2 mr-auto flex items-center gap-1">更多操作<Caret className="border-t-[#7fb8c4]" /></a>
        <button type="button" className={`${grayBtn} mb-1.5 w-[125px] h-6 text-[16px] leading-5`}>转交下一步</button>
        <button type="button" className={`${grayBtn} mb-1 w-[50px] h-[21px] text-[13px] leading-4`}>回退</button>
        <button type="button" className={`${grayBtn} mb-1 w-[50px] h-[21px] text-[13px] leading-4`}>保存</button>
        <button type="button" className={`${grayBtn} mb-1 w-[74px] h-[21px] text-[13px] leading-4`}>保存返回</button>
        <button type="button" className={`${grayBtn} mb-1 w-[50px] h-[21px] text-[13px] leading-4`}>返回</button>
      </div>
    </main>
  );
}

function PageFooter() {
  return (
    <footer className="h-[22px] shrink-0 flex items-center pb-1 border-t border-[#8fb0c8] bg-gradient-to-b from-[#c3e0f0] to-[#f6fafc] text-[12px] leading-[14px] text-[#47617a]">
      <span className="w-[550px] pl-[27px]">在线<b className="mx-3 text-[#d80000]">5</b>人</span>
      <b className="text-[13px]">●没有所谓不幸，对他人的感恩与爱让你立即幸福。</b>
      <span className="flex-1 flex justify-end gap-20 pr-[53px]"><a href="#">新邮件</a><a href="#">新窗口</a></span>
    </footer>
  );
}

function StatusBar() {
  return (
    <div className="h-[23px] shrink-0 flex items-center justify-end bg-gradient-to-b from-[#f5f2e6] to-[#e8e4d2] border-t border-[#aca899] text-[13px] leading-4 text-black">
      {[0, 1, 2, 3, 4, 5].map((i) => <span key={i} className="w-6 h-4 border-l border-[#cfccba]" />)}
      <div className="w-[180px] flex items-center gap-0.5 pl-1 border-l border-[#cfccba] whitespace-pre">
        <Svg><circle cx="5" cy="5.500" r="4.500" fill="#3f9a4c" stroke="#1c5a8c" /><rect x="6" y="3.500" width="9.500" height="8" rx="1" fill="#8fd0f4" stroke="#3a6c9c" /><path d="M8 14.500h6" stroke="#8899aa" strokeWidth="2" /></Svg>
        <span>本地<span className="font-['Liberation_Mono',monospace] text-[12px] leading-none"> Intranet</span></span>
      </div>
      <div className="w-[45px] h-4 flex items-center justify-center gap-2 border-l border-[#cfccba]">
        <Svg><path d="M1 9c1-5 6-8 10-5" stroke="#aaa9a0" strokeWidth="2.500" /><rect x="8" y="8" width="7" height="7" fill="#9c9b92" /><path d="M9.500 8V6h4v2" stroke="#9c9b92" strokeWidth="1.300" /></Svg>
        <Caret className="border-x-3 border-t-3 border-t-black" />
      </div>
      <div className="w-[92px] h-4 flex items-center gap-1 pl-2.5 border-l border-[#cfccba]">
        <Svg className="w-3.5 h-3.5"><circle cx="6" cy="6" r="5" fill="#dff0fd" stroke="#4a82c0" strokeWidth="1.300" /><path d="M3.500 6h5M6 3.500v5" stroke="#1c62b8" strokeWidth="1.500" /><path d="M10 10l5 5" stroke="#8a6a40" strokeWidth="2.500" /></Svg>
        <span className="font-['Liberation_Mono',monospace] text-[12px]">100%</span>
        <Caret className="ml-2.5 border-x-3 border-t-3 border-t-black" />
      </div>
      <Svg className="w-3 h-3 self-end"><path d="M12 4h3M7 9h8M2 14h13" stroke="#b5b19c" strokeWidth="2.500" strokeDasharray="2.500 2.500" /></Svg>
    </div>
  );
}

const TRAY = [
  <Svg><circle cx="8" cy="8" r="7.500" fill="#1a2fc0" stroke="#8fb4ff" strokeWidth=".8" /><path d="M10.500 5C8 3.500 5.500 5 6.500 7s4 1.500 3 4-4 1.500-4.500.5" stroke="#fff" strokeWidth="1.500" /></Svg>,
  <Svg><rect x="1" y="1" width="14" height="14" rx="2" fill="#f6e6c0" stroke="#a8843c" /><circle cx="8" cy="8" r="5" fill="#fff" stroke="#d08a20" strokeWidth="1.300" /><path d="M5 7l3 3 3-3" stroke="#b06a10" strokeWidth="1.400" /></Svg>,
  <Svg><path d="M3 5c3-4 5 0 8 3s3 7-1 7-7-2-7-5z" fill="#d4ecfc" stroke="#6aa4d4" /><path d="M4 2l3 5" stroke="#8fc4ec" strokeWidth="2" /></Svg>,
  <Svg><rect x="2" y="3.500" width="12" height="8" fill="#1428a0" stroke="#dcd8c4" strokeWidth="1.400" /><path d="M5 0l3 3 3-3M1 14.500h14" stroke="#111" strokeWidth="1.200" /><path d="M7 12h2v3H7z" fill="#e8c820" /></Svg>,
  <Svg><path d="M8 .8l6.500 2c0 6-1.500 10-6.500 12.500C3 12.800 1.500 8.800 1.500 2.800z" fill="#5eb83a" stroke="#eef8e4" strokeWidth="1.300" /><path d="M9 4L6 8.500h2L7 12l4-5H9z" fill="#fff" /></Svg>,
  <Svg><path d="M1 1l7 7" stroke="#8c2a6c" strokeWidth="3" /><circle cx="10.500" cy="10.500" r="5" fill="#f4f8f4" stroke="#888" strokeWidth=".7" /><path d="M9 7.500v6l4.500-3z" fill="#1c8a2c" /></Svg>,
  <Svg><circle cx="8" cy="8" r="7.500" fill="#f4dc1c" /><path d="M15 6A7.500 7.500 0 0 1 3 13.500L8 11z" fill="#3aaa28" /><path d="M8 4v8M4 8h8" stroke="#15601a" strokeWidth="2.800" /></Svg>,
  <Svg><rect x="6" y="1" width="9" height="7" fill="#8cc4f0" stroke="#dcecf8" /><rect x="1" y="6" width="9" height="7" fill="#5c9ce0" stroke="#dcecf8" /><path d="M3 15h6" stroke="#dcecf8" strokeWidth="1.500" /></Svg>,
  <Svg><circle cx="8" cy="8" r="7.500" fill="#e89028" /><path d="M4.500 12V5.500l5 6V4.500" stroke="#fff" strokeWidth="2" /></Svg>,
  <Svg><circle cx="6" cy="7" r="5.500" fill="#8a8f96" stroke="#3c4048" /><circle cx="6" cy="7" r="2.300" fill="#33383f" /><path d="M12 13a7 7 0 0 0 2-6" stroke="#9cc8f4" strokeWidth="1.300" /></Svg>,
  <Svg><path d="M2 9l8-4 4 5-8 4z" fill="#8c969e" stroke="#2a3036" strokeWidth=".8" /><path d="M3 1h5v5H3z" fill="#38b048" /><path d="M6 5l3 4" stroke="#38b048" strokeWidth="2.500" /></Svg>,
];

function Taskbar() {
  const task = 'w-[158px] h-6 flex items-center gap-2 px-3 rounded-[3px] whitespace-nowrap';
  const dots = <span className="w-1.5 h-5 shrink-0 border-x-2 border-dotted border-[#1a45ae]" />;
  return (
    <footer className="h-[33px] shrink-0 flex items-center text-[13px] leading-4 text-white bg-[linear-gradient(180deg,#3d8af0_0%,#3a7cec_8%,#2560d8_20%,#245edb_85%,#1b48b4_100%)]">
      <button type="button" className="h-full w-[101px] flex items-center gap-1.5 pl-2.5 rounded-r-xl bg-[linear-gradient(180deg,#6cb86a_0%,#3c9a3c_20%,#358c35_70%,#206a20_100%)] text-[20px] leading-6 italic [text-shadow:1px_1px_2px_#143c14]">
        <Svg className="w-5 h-5">
          <path d="M2 3c2-1 4-1 5 0L6 7.500c-1.500-1-3.500-1-5 0z" fill="#f05a28" />
          <path d="M8 3.300c2 1 4 1 6 0L13 8c-2 1-4 1-6 0z" fill="#8cc83c" />
          <path d="M.8 8.500c2-1 3.500-1 5 0L4.800 13c-1.500-1-3-1-5 0z" fill="#4a90e8" />
          <path d="M6.800 9c2 1 4 1 6 0l-1 4.500c-2 1-4 1-6 0z" fill="#fcc81c" />
        </Svg>
        开始
      </button>
      <span className="ml-[7px] w-[42px] h-6 border border-[#4f86ea] text-center text-[20px] leading-[22px] font-bold font-['Liberation_Sans',sans-serif]">C</span>
      <div className="flex items-center gap-[7px] ml-1">
        {dots}
        <Svg><rect x="1" y="2" width="13" height="12" rx="2" fill="#e8f4fc" stroke="#3a80c0" /><path d="M10 11a3.500 3.500 0 1 1 .8-3H5" stroke="#2878c8" strokeWidth="1.500" /><path d="M9 7l5-5" stroke="#333" /></Svg>
        <Svg><ellipse cx="8" cy="10" rx="5.500" ry="5.500" fill="#1a1a1a" /><circle cx="8" cy="4.500" r="4" fill="#1a1a1a" /><ellipse cx="8" cy="11" rx="3.500" ry="4" fill="#fff" /><path d="M3.500 8c3 1.500 6 1.500 9 0v2c-3 1.500-6 1.500-9 0z" fill="#e02020" /><path d="M5.500 5.500h5L8 7zM3 15h4M9 15h4" fill="#f8a818" stroke="#f8a818" /><circle cx="6.600" cy="3.500" r="1" fill="#fff" /><circle cx="9.400" cy="3.500" r="1" fill="#fff" /></Svg>
        <Svg><path d="M1 6c3-4 8-4 14-5-1 3-3 4-5 5 2 3 1 7-3 9 0-3-1-4-4-3 2-2 2-3-2-6z" fill="#e4f0fc" stroke="#6ea8e4" strokeWidth=".6" /></Svg>
        <span className="ml-1.5 mb-3 text-[14px]">»</span>
      </div>
      <div className="flex items-center gap-0.5 ml-2">
        {dots}
        <button type="button" className={`${task} ml-0.5 bg-[#1a4cb8] shadow-[inset_1px_1px_2px_#0c2c80]`}><IconIE /><span><Mixed latin="text-[12px] font-['Liberation_Mono',monospace]" text="每日OA必做：记..." /></span></button>
        <button type="button" className={`${task} bg-gradient-to-b from-[#5a9cfa] to-[#3a7cf0]`}>
          <Svg><path d="M2 1h8l3 3v8H2z" fill="#fff" stroke="#555" strokeWidth=".8" /><path d="M4 5l7 2-1 7-5-2z" fill="#3c78c8" /><path d="M11 9l3 3-2 3-3-2z" fill="#e8a030" /></Svg>
          <span className="-ml-1 font-['Liberation_Mono',monospace] text-[12px]">PaperPort</span>
        </button>
        <button type="button" className={`${task} bg-gradient-to-b from-[#5a9cfa] to-[#3a7cf0]`}>
          <Svg><path d="M4 8h8l-1 7H5z" fill="#e8e0c0" stroke="#7a6a3a" strokeWidth=".8" /><path d="M6 8L3 1M10 8l3-6" stroke="#d84a20" strokeWidth="1.800" /><path d="M8 8V1" stroke="#f0c020" strokeWidth="1.800" /></Svg>
          <span className="-ml-1"><Mixed latin="text-[12px] font-['Liberation_Mono',monospace]" text="错位2.bmp - 画图" /></span>
        </button>
      </div>
      <div className="ml-auto flex items-center gap-2 mr-[22px]">
        {dots}
        <Svg className="w-3.5 h-3.5"><rect width="16" height="16" rx="1" fill="#f05022" /><path d="M12.500 4H6a2 2 0 0 0 0 4h4a2 2 0 0 1 0 4H3.500" stroke="#fff" strokeWidth="2.400" /></Svg>
        {dots}
        <div className="flex h-[21px]">
          <input aria-label="搜索桌面" placeholder="搜索桌面" className="w-[110px] px-1 bg-white text-[12px] leading-4 placeholder:text-[#9c9c94] outline-none" />
          <button type="button" aria-label="搜索" className="w-[25px] bg-[#cbdcec] flex items-center justify-center"><IconGlass className="w-3.5 h-3.5" /></button>
        </div>
      </div>
      <div className="h-full w-[263px] flex items-center pl-2.5 gap-0.5 border-l border-[#0c3c90] bg-[linear-gradient(180deg,#3cb0f4_0%,#1894e8_15%,#1290e8_80%,#0c6cc0_100%)]">
        {TRAY.map((icon, i) => <React.Fragment key={i}>{icon}</React.Fragment>)}
        <span className="ml-1.5 font-['Liberation_Mono',monospace] text-[12px]">10:43</span>
      </div>
    </footer>
  );
}

function SpeedWidget() {
  return (
    <div className="absolute right-[59px] bottom-[176px] w-[174px] h-[27px] flex items-center gap-1 px-1.5 rounded-md border border-[#c3dde4] bg-gradient-to-b from-[#f6fcfd] to-[#bfe6ef] shadow-[0_1px_4px_#9aa8ac] text-[12px] leading-4 text-[#222] font-['Noto_Sans','Noto_Sans_CJK_SC',sans-serif]">
      <Svg className="w-[18px] h-[18px]"><circle cx="8" cy="8" r="7.500" fill="#f4dc1c" /><path d="M15.500 7A7.500 7.500 0 0 1 3 13.500L9 12z" fill="#3aaa28" /><path d="M8 4v8M4 8h8" stroke="#15701a" strokeWidth="3" /></Svg>
      <Svg className="w-2.5 h-2.5 ml-0.5"><path d="M8 1v13M2 8.500l6 6 6-6" stroke="#2c9a3c" strokeWidth="2.600" /></Svg>
      <span className="text-[11px]">0.05K/S</span>
      <Svg className="w-2.5 h-2.5"><path d="M8 15V2M2 7.500l6-6 6 6" stroke="#f0a818" strokeWidth="2.600" /></Svg>
      <span className="ml-auto text-[11px]">172K/S</span>
      <span className="w-5 h-5 flex items-center justify-center rounded-sm border border-[#9cc8dc]"><IconIE className="w-3.5 h-3.5" /></span>
    </div>
  );
}

export default function App() {
  return (
    <div className="relative h-screen flex flex-col overflow-hidden bg-[#0a4fd8] font-['Noto_Sans_CJK_SC','Liberation_Sans',sans-serif]">
      <TitleBar />
      <div className="flex-1 min-h-0 mx-1 mb-1 flex flex-col">
        <Chrome />
        <div className="flex-1 min-h-0 pt-1 pl-px pr-0.5 flex flex-col bg-[#f3f4f2]">
          <div className="flex-1 min-h-0 flex flex-col border-t border-l border-[#7b8288] bg-[#d6e4ef]">
            <Banner />
            <NavBar />
            <div className="flex-1 min-h-0 flex">
              <Sidebar />
              <Workspace />
            </div>
            <PageFooter />
          </div>
        </div>
        <StatusBar />
      </div>
      <Taskbar />
      <ImeBar />
      <SpeedWidget />
    </div>
  );
}
